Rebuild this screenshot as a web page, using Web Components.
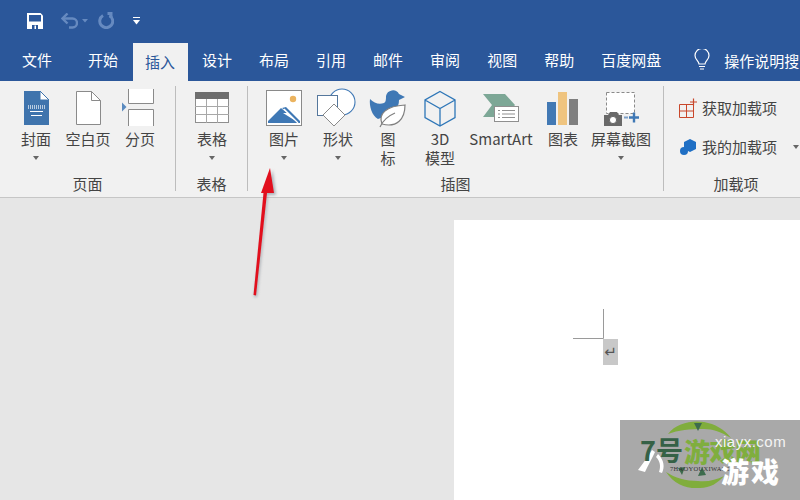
<!DOCTYPE html>
<html lang="zh">
<head>
<meta charset="utf-8">
<title>插入</title>
<style>
  html, body { margin: 0; height: 100%; overflow: hidden; }
  body { font-family: "Noto Sans CJK SC", "Noto Sans", sans-serif; }
</style>
</head>
<body>
<word-window>
  <quick-bar></quick-bar>
  <tab-bar>
    <tab-item first>文件</tab-item>
    <tab-item>开始</tab-item>
    <tab-item active>插入</tab-item>
    <tab-item>设计</tab-item>
    <tab-item>布局</tab-item>
    <tab-item>引用</tab-item>
    <tab-item>邮件</tab-item>
    <tab-item>审阅</tab-item>
    <tab-item>视图</tab-item>
    <tab-item>帮助</tab-item>
    <tab-item>百度网盘</tab-item>
    <tell-me>操作说明搜</tell-me>
  </tab-bar>
  <ribbon-bar>
    <ribbon-group label="页面" pad="13 12" width="176">
      <ribbon-button icon="cover" width="46" arrow>封面</ribbon-button>
      <ribbon-button icon="blank" width="58">空白页</ribbon-button>
      <ribbon-button icon="pagebreak" width="46">分页</ribbon-button>
    </ribbon-group>
    <ribbon-group label="表格" pad="13 13" width="72">
      <ribbon-button icon="table" width="46" arrow>表格</ribbon-button>
    </ribbon-group>
    <ribbon-group label="插图" pad="8 12" width="416">
      <ribbon-button icon="picture" width="56" arrow>图片</ribbon-button>
      <ribbon-button icon="shapes" width="52" arrow>形状</ribbon-button>
      <ribbon-button icon="icons" width="48">图<br>标</ribbon-button>
      <ribbon-button icon="cube" width="56">3D<br>模型</ribbon-button>
      <ribbon-button icon="smartart" width="66">SmartArt</ribbon-button>
      <ribbon-button icon="chart" width="58">图表</ribbon-button>
      <ribbon-button icon="screenshot" width="58" arrow>屏幕截图</ribbon-button>
    </ribbon-group>
    <ribbon-group label="加载项" pad="14 0" width="144" last stacked>
      <addin-item icon="get">获取加载项</addin-item>
      <addin-item icon="mine" arrow>我的加载项</addin-item>
    </ribbon-group>
  </ribbon-bar>
  <doc-area></doc-area>
  <red-arrow></red-arrow>
  <site-mark></site-mark>
</word-window>

<script>
"use strict";
const ICONS = {
  cover: `<path d="M10 5h16l9 9v25H10z" fill="#3f74ad"/><path d="M26 5l9 9h-9z" fill="#fff" stroke="#3f74ad"/>
    <path d="M14 20h17M14 22h17" stroke="#dfe7f1" stroke-width="1.4" stroke-dasharray="1 1"/><path d="M16 25.500h13M17 29.500h11" stroke="#fff"/>`,
  blank: `<path d="M10.500 5.500h15l9 9v24h-24z" fill="#fff" stroke="#8a8a8a"/><path d="M25.500 5.500v9h9" fill="none" stroke="#8a8a8a"/>`,
  pagebreak: `<path d="M10.500 3v14.500h25V3" fill="#fff" stroke="#8a8a8a"/><path d="M10.500 40V23.500h25V40" fill="#fff" stroke="#8a8a8a"/><path d="M4 16.500l4.500 4.500L4 25.500z" fill="#5a8abf"/>`,
  table: `<rect x="5.500" y="6.500" width="33" height="30" fill="#fff" stroke="#8f8f8f"/><rect x="5" y="6" width="34" height="7" fill="#6e6e6e"/>
    <path d="M5 20.500h34M5 28.500h34M16.500 13v24M27.500 13v24" stroke="#a8a8a8"/>`,
  picture: `<rect x="4.500" y="4.500" width="35" height="35" fill="#fff" stroke="#8a8a8a"/><circle cx="31" cy="13" r="3.200" fill="#ebb35f"/>
    <path d="M6 37v-2l13-13 6 5-4 0 16 10z" fill="#3f78b5"/><path d="M24 21l14 14v2l-2 0-12-12-4-3z" fill="#3f78b5"/><path d="M22 23l14 14" stroke="#fff" stroke-width="1.200"/>`,
  shapes: `<circle cx="26" cy="16" r="13" fill="#fff" stroke="#3f78b5" stroke-width="1.100"/><rect x="1.500" y="9.500" width="20" height="20" fill="#fff" stroke="#55779c"/>
    <path d="M18 18l11 11-11 11-11-11z" fill="#fff" stroke="#8a8a8a"/>`,
  icons: `<path d="M4 13c4 4 9 6 14 4 2-1 2-4 2-7a7 7 0 0 1 13-2l6 3-6 3c0 8-5 14-13 16l-8 3C6 30 3 20 4 13z" fill="#3f78b5"/>
    <path d="M16 38c-4-10 4-18 23-19 0 14-8 23-23 19z" fill="#fff" stroke="#7f7f7f" stroke-width="1.200"/><path d="M14 41c3-7 8-11 15-14" fill="none" stroke="#7f7f7f" stroke-width="1.200"/>`,
  cube: `<path d="M22 5.500l15 8.500v17.500l-15 8.500-15-8.500V14zM7 14l15 8.500L37 14M22 22.500V40" fill="none" stroke="#2f77b8" stroke-width="1.300"/>`,
  smartart: `<path d="M4 8h22l10 11-10 12H4l9-12z" fill="#7da796"/><rect x="15.500" y="20.500" width="24" height="15" fill="#fff" stroke="#8f8f8f"/>
    <path d="M19 24.500h2M23 24.500h13M19 28h2M23 28h13M19 31.500h2M23 31.500h13" stroke="#8f8f8f"/>`,
  chart: `<rect x="6" y="16" width="9" height="23" fill="#4279b4"/><rect x="17" y="6" width="9" height="33" fill="#efc47f"/><rect x="28" y="13" width="9" height="26" fill="#7f7f7f"/>`,
  screenshot: `<rect x="7.500" y="6.500" width="28" height="21" fill="#fff" stroke="#8a8a8a" stroke-dasharray="3 2"/>
    <path d="M5 29h4l2-3h7l2 3h3v11H5z" fill="#696969"/><circle cx="14" cy="34" r="3.600" fill="#fff" stroke="#696969"/>
    <path d="M25 31.500h4" stroke="#7da0c8" stroke-width="2"/><path d="M30 31.500h10M35 26.500v10" stroke="#3f78b5" stroke-width="2.400"/>`
};

class WordWindow extends HTMLElement {
  constructor() {
    super();
    this.attachShadow({mode: 'open'}).innerHTML = `
      <style>
        :host { display: flex; flex-direction: column; position: relative; width: 800px; height: 500px; overflow: hidden; background: #e6e6e6; }
      </style>
      <slot></slot>`;
  }
}

class QuickBar extends HTMLElement {
  constructor() {
    super();
    this.attachShadow({mode: 'open'}).innerHTML = `
      <style>
        :host { display: flex; align-items: center; height: 41px; padding-left: 27px; background: #2b579a; box-sizing: border-box; }
        svg { display: block; }
        .undo { margin-left: 18px; }
        .undo-arrow { margin-left: 4px; }
        .redo { margin-left: 10px; }
        .more { margin-left: 19px; }
      </style>
      <svg width="16" height="16" viewBox="0 0 16 16"><path d="M0 0h13.500L16 2.500V16H0z" fill="#fff"/><rect x="2" y="2" width="12" height="6.500" fill="#2b579a"/><rect x="5" y="12" width="6" height="4" fill="#2b579a"/><rect x="7.500" y="12.500" width="1.500" height="3.500" fill="#fff"/></svg>
      <svg class="undo" width="17" height="16" viewBox="0 0 17 16"><path d="M2 5.500h9.500a4.500 4.500 0 0 1 0 9H8" fill="none" stroke="#668ac0" stroke-width="2.400"/><path d="M6.500 .5L1.500 5.500l5 5" fill="none" stroke="#668ac0" stroke-width="2.400"/></svg>
      <svg class="undo-arrow" width="6" height="4" viewBox="0 0 6 4"><path d="M0 0h6L3 3.500z" fill="#668ac0"/></svg>
      <svg class="redo" width="16" height="17" viewBox="0 0 16 17"><path d="M5 3.500a6.500 6.500 0 1 0 6.500 0" fill="none" stroke="#668ac0" stroke-width="3"/><path d="M9.500 0h5v6h-3V3h-2z" fill="#668ac0"/></svg>
      <svg class="more" width="7" height="8" viewBox="0 0 7 8"><path d="M0 0.500h7" stroke="#fff"/><path d="M0 3h7L3.500 7.500z" fill="#fff"/></svg>`;
  }
}

class TabBar extends HTMLElement {
  constructor() {
    super();
    this.attachShadow({mode: 'open'}).innerHTML = `
      <style>
        :host { display: flex; align-items: stretch; height: 40px; padding-left: 8.500px; background: #2b579a; color: #fff; font-size: 15px; box-sizing: border-box; }
      </style>
      <slot></slot>`;
  }
}

class TabItem extends HTMLElement {
  constructor() {
    super();
    this.attachShadow({mode: 'open'}).innerHTML = `
      <style>
        :host { display: flex; align-items: center; padding: 0 13.500px 4px; white-space: nowrap; box-sizing: border-box; }
        :host([first]) { margin-right: 9px; }
        :host([active]) { margin: 2px 1px 0; padding: 0 12.500px 2px; background: #f1f1f1; color: #2b579a; }
      </style>
      <slot></slot>`;
  }
}

class TellMe extends HTMLElement {
  constructor() {
    super();
    this.attachShadow({mode: 'open'}).innerHTML = `
      <style>
        :host { display: flex; align-items: center; gap: 14px; margin-left: 19.500px; padding-bottom: 2px; white-space: nowrap; }
        svg { display: block; }
      </style>
      <svg width="16" height="22" viewBox="0 0 16 22" fill="none" stroke="#fff" stroke-width="1.200"><path d="M5 15c0-3-4-4-4-8.500a7 7 0 0 1 14 0C15 11 11 12 11 15z"/><path d="M5 17.500h6M6 20h4"/></svg>
      <slot></slot>`;
  }
}

class RibbonBar extends HTMLElement {
  constructor() {
    super();
    this.attachShadow({mode: 'open'}).innerHTML = `
      <style>
        :host { display: flex; align-items: flex-start; height: 117px; padding-top: 5px; background: #f1f1f1; border-bottom: 1px solid #c6c6c6; box-sizing: border-box; color: #444; font-size: 15px; }
      </style>
      <slot></slot>`;
  }
}

class RibbonGroup extends HTMLElement {
  constructor() {
    super();
    const [left, right] = (this.getAttribute('pad') || '0 0').split(' ');
    const root = this.attachShadow({mode: 'open'});
    root.innerHTML = `
      <style>
        :host { display: flex; flex-direction: column; flex: none; height: 105px; box-sizing: border-box; border-right: 1px solid #bdbdbd; }
        :host([last]) { border-right: 0; }
        .items { display: flex; flex: 1; min-height: 0; }
        :host([stacked]) .items { flex-direction: column; padding-top: 2px; }
        .label { line-height: 14px; text-align: center; white-space: nowrap; }
      </style>
      <div class="items" style="padding-left:${left}px;padding-right:${right}px"><slot></slot></div>
      <div class="label"></div>`;
    root.querySelector('.label').textContent = this.getAttribute('label');
    this.style.width = this.getAttribute('width') + 'px';
  }
}

class RibbonButton extends HTMLElement {
  constructor() {
    super();
    const root = this.attachShadow({mode: 'open'});
    root.innerHTML = `
      <style>
        :host { display: flex; flex-direction: column; align-items: center; flex: none; white-space: nowrap; text-align: center; line-height: 19px; }
        svg { display: block; flex: none; margin-bottom: 1px; }
        .arrow { width: 0; height: 0; margin-top: 8px; border: 3.500px solid transparent; border-top: 4px solid #666; border-bottom: 0; }
      </style>
      <svg width="44" height="42" viewBox="0 0 44 42">${ICONS[this.getAttribute('icon')]}</svg>
      <span><slot></slot></span>
      ${this.hasAttribute('arrow') ? '<div class="arrow"></div>' : ''}`;
    this.style.width = this.getAttribute('width') + 'px';
  }
}

class AddinItem extends HTMLElement {
  constructor() {
    super();
    const get = this.getAttribute('icon') === 'get';
    this.attachShadow({mode: 'open'}).innerHTML = `
      <style>
        :host { display: flex; align-items: center; gap: 4px; height: 39px; white-space: nowrap; }
        svg { display: block; flex: none; }
        .arrow { margin-left: 12px; border: 3.500px solid transparent; border-top: 4px solid #666; border-bottom: 0; }
      </style>
      <svg width="20" height="20" viewBox="0 0 20 20">${get
        ? '<path d="M1.500 6.500h14v13h-14zM1.500 13h14M8.500 6.500v13" fill="none" stroke="#c9472b"/><path d="M12 4h7M15.500 0.500v7" stroke="#c9472b" stroke-width="1.200"/>'
        : '<path d="M12 2l6 3v7l-6 3-6-3V5z" fill="#1f6fc4"/><circle cx="6" cy="14" r="4" fill="#1f6fc4"/>'}</svg>
      <slot></slot>
      ${this.hasAttribute('arrow') ? '<div class="arrow"></div>' : ''}`;
  }
}

class DocArea extends HTMLElement {
  constructor() {
    super();
    this.attachShadow({mode: 'open'}).innerHTML = `
      <style>
        :host { display: flex; flex: 1; min-height: 0; padding: 22px 0 0 454px; background: #e6e6e6; box-sizing: border-box; }
        .page { flex: 1; display: flex; flex-direction: column; align-items: flex-start; padding: 89px 0 0 119px; background: #fff; }
        svg { display: block; }
        .mark { width: 15px; height: 26px; margin-left: 30px; background: #c8c8c8; color: #555; font: 15px/26px "DejaVu Sans", sans-serif; text-align: center; }
      </style>
      <div class="page">
        <svg width="31" height="30" viewBox="0 0 31 30"><path d="M0 29.500h30.500V0" fill="none" stroke="#9a9a9a"/></svg>
        <div class="mark">↵</div>
      </div>`;
  }
}

class RedArrow extends HTMLElement {
  constructor() {
    super();
    this.attachShadow({mode: 'open'}).innerHTML = `
      <style>
        :host { position: absolute; left: 240px; top: 160px; width: 50px; height: 145px; }
        svg { display: block; }
      </style>
      <svg width="50" height="145" viewBox="0 0 50 145">
        <defs><filter id="s" x="-40%" y="-10%" width="180%" height="120%"><feGaussianBlur stdDeviation="1.600"/></filter></defs>
        <path d="M32.500 10L23.500 35H28L17 137h-3L26 35h10z" fill="#7d8590" opacity=".6" filter="url(#s)"/>
        <path d="M30 8L21 33H34z" fill="#e20f1d"/>
        <path d="M23.500 33L13.500 135l2.500 .5L27 33z" fill="#e20f1d"/>
      </svg>`;
  }
}

class SiteMark extends HTMLElement {
  constructor() {
    super();
    this.attachShadow({mode: 'open'}).innerHTML = `
      <style>
        :host { position: absolute; left: 620px; top: 420px; width: 180px; height: 80px; background: #a9a9a9; overflow: hidden; font-family: "Noto Sans CJK SC", sans-serif; }
        span { position: absolute; white-space: nowrap; line-height: 1; }
        svg { position: absolute; left: 0; top: 0; }
        .num { left: 20px; top: 16px; font-size: 27px; font-weight: 700; color: #356146; }
        .net { left: 64px; top: 18px; font-size: 26px; font-weight: 900; color: #7fae3e; letter-spacing: -.500px; }
        .url { left: 95px; top: 13px; font: 15px "Liberation Sans", sans-serif; color: #f4f4f4; letter-spacing: .500px; }
        .en { left: 50px; top: 45px; font: 6.500px "Liberation Serif", serif; color: #333; letter-spacing: .300px; }
        .big { left: 101px; top: 37px; font-size: 28px; font-weight: 900; color: #fff; letter-spacing: 2px; }
      </style>
      <svg width="180" height="80" viewBox="0 0 180 80">
        <path d="M48 14C56 3 72 0 84 2c11 2 20 7 27 16-10-6-18-9-27-9-14 0-26 1-36 5z" fill="#80ad3c"/>
        <path d="M46 52c8 12 20 17 34 16 10 0 18-5 24-12-8 4-16 6-26 5-12 0-23-3-32-9z" fill="#80ad3c"/>
        <path d="M74 3l4 8 4-8zM58 48l4 7 3-8zM82 47l-4 9 8-1z" fill="#3d6b4d"/>
        <path d="M18 50c5-7 10-13 14-20l3 2c-3 7-7 13-10 20zM38 34c6 6 7 13 4 19l-3-1c2-6 1-11-3-15z" fill="#fff"/>
      </svg>
      <span class="num">7号</span>
      <span class="net">游戏网</span>
      <span class="url">xiayx.com</span>
      <span class="en">7HAOYOUXIWANG</span>
      <span class="big">游戏</span>`;
  }
}

window.customElements.define('ribbon-group', RibbonGroup);
window.customElements.define('ribbon-button', RibbonButton);
window.customElements.define('addin-item', AddinItem);
window.customElements.define('word-window', WordWindow);
window.customElements.define('quick-bar', QuickBar);
window.customElements.define('tab-bar', TabBar);
window.customElements.define('tab-item', TabItem);
window.customElements.define('tell-me', TellMe);
window.customElements.define('ribbon-bar', RibbonBar);
window.customElements.define('doc-area', DocArea);
window.customElements.define('red-arrow', RedArrow);
window.customElements.define('site-mark', SiteMark);
</script>
</body>
</html>
